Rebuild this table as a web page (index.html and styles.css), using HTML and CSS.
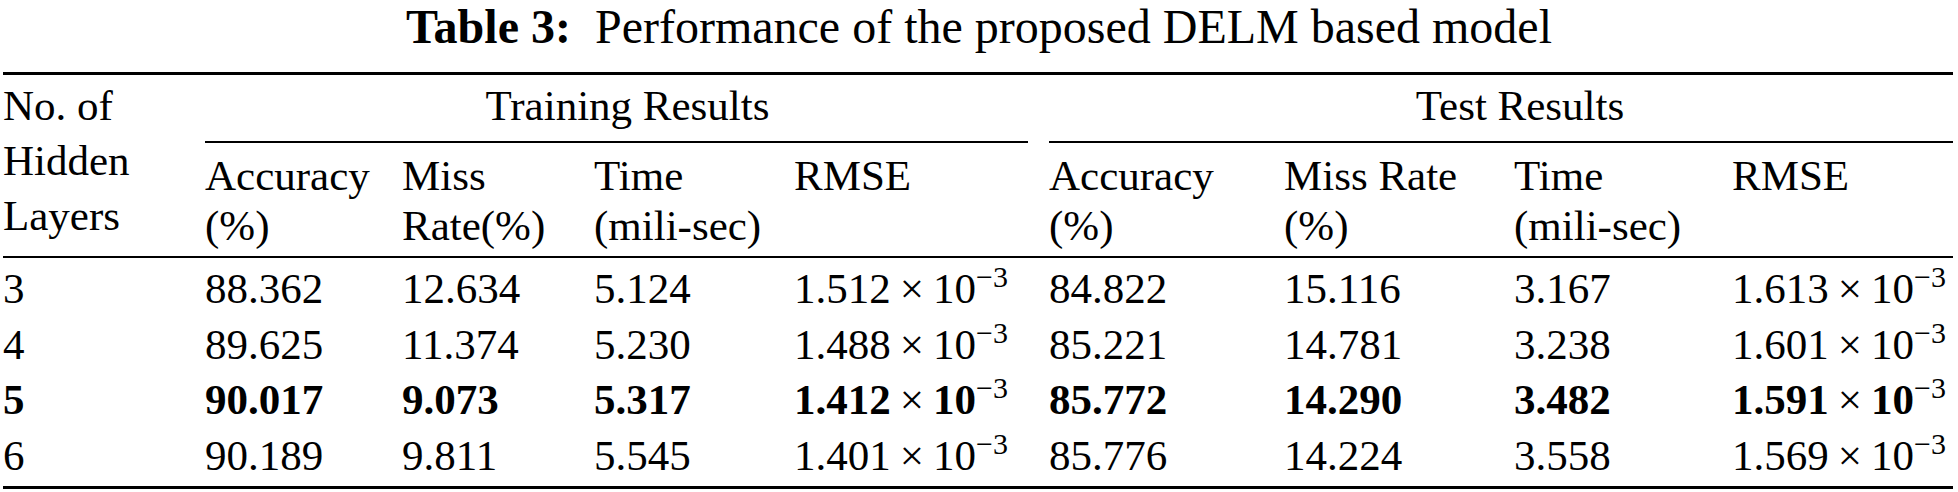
FILE: index.html
```html
<!DOCTYPE html>
<html lang="en">
<head>
  <meta charset="UTF-8">
  <title>Table 3: Performance of the proposed DELM based model</title>
  <link rel="stylesheet" href="styles.css">
</head>
<body>

<div class="caption"><b>Table 3:</b>&nbsp; Performance of the proposed DELM based model</div>

<table class="results">
  <colgroup>
    <col class="c-layers">
    <col class="c-acc"><col class="c-miss"><col class="c-time"><col class="c-rmse">
    <col class="c-acc2"><col class="c-miss2"><col class="c-time2"><col class="c-rmse2">
  </colgroup>
  <thead>
    <tr class="group-row">
      <th rowspan="2" class="layers">No. of<br>Hidden<br>Layers</th>
      <th colspan="4" class="group"><div class="cmid train">Training Results</div></th>
      <th colspan="4" class="group"><div class="cmid test">Test Results</div></th>
    </tr>
    <tr class="sub-row">
      <th>Accuracy<br>(%)</th>
      <th>Miss<br>Rate(%)</th>
      <th>Time<br>(mili-sec)</th>
      <th>RMSE</th>
      <th>Accuracy<br>(%)</th>
      <th>Miss Rate<br>(%)</th>
      <th>Time<br>(mili-sec)</th>
      <th>RMSE</th>
    </tr>
  </thead>
  <tbody>
    <tr>
      <td>3</td><td>88.362</td><td>12.634</td><td>5.124</td>
      <td>1.512<span class="times">×</span>10<sup>−3</sup></td>
      <td>84.822</td><td>15.116</td><td>3.167</td>
      <td>1.613<span class="times">×</span>10<sup>−3</sup></td>
    </tr>
    <tr>
      <td>4</td><td>89.625</td><td>11.374</td><td>5.230</td>
      <td>1.488<span class="times">×</span>10<sup>−3</sup></td>
      <td>85.221</td><td>14.781</td><td>3.238</td>
      <td>1.601<span class="times">×</span>10<sup>−3</sup></td>
    </tr>
    <tr class="best">
      <td>5</td><td>90.017</td><td>9.073</td><td>5.317</td>
      <td>1.412<span class="times">×</span>10<sup>−3</sup></td>
      <td>85.772</td><td>14.290</td><td>3.482</td>
      <td>1.591<span class="times">×</span>10<sup>−3</sup></td>
    </tr>
    <tr>
      <td>6</td><td>90.189</td><td>9.811</td><td>5.545</td>
      <td>1.401<span class="times">×</span>10<sup>−3</sup></td>
      <td>85.776</td><td>14.224</td><td>3.558</td>
      <td>1.569<span class="times">×</span>10<sup>−3</sup></td>
    </tr>
  </tbody>
</table>

</body>
</html>
```

FILE: styles.css
```css
body {
  margin: 0;
  padding: 0;
  background-color: #fff;
  color: #000;
  font-family: "Liberation Serif", "Times New Roman", serif;
}

.caption {
  font-size: 48px;
  line-height: 53px;
  text-align: center;
  margin-bottom: 19px;
}

.results {
  border-collapse: separate;
  border-spacing: 0;
  table-layout: fixed;
  width: 1950px;
  margin-left: 3px;
  font-size: 43px;
}

.c-layers { width: 202px; }
.c-acc { width: 197px; }
.c-miss { width: 192px; }
.c-time { width: 200px; }
.c-rmse { width: 255px; }
.c-acc2 { width: 235px; }
.c-miss2 { width: 230px; }
.c-time2 { width: 218px; }
.c-rmse2 { width: 221px; }

th, td {
  padding: 0;
  text-align: left;
  vertical-align: top;
  font-weight: normal;
  white-space: nowrap;
}

/* top rule */
.group-row th {
  border-top: 3px solid #000;
  padding-top: 3px;
  line-height: 55px;
}

.layers {
  border-bottom: 2px solid #000;
}

.cmid {
  text-align: center;
  padding-bottom: 8px;
  border-bottom: 2px solid #000;
}

.cmid.train {
  margin-right: 21px;
  padding-left: 22px;
}

.cmid.test {
  padding-left: 38px;
}

/* midrule */
.sub-row th {
  line-height: 50px;
  padding-top: 8px;
  padding-bottom: 5px;
  border-bottom: 2px solid #000;
}

td {
  line-height: 55.5px;
}

tbody tr:first-child td {
  padding-top: 3px;
}

/* bottom rule */
tbody tr:last-child td {
  padding-bottom: 3px;
  border-bottom: 3px solid #000;
}

.best td {
  font-weight: bold;
}

.times {
  font-weight: normal;
  margin: 0 9px;
}

sup {
  font-size: 30px;
  font-weight: normal;
  line-height: 0;
  vertical-align: 16px;
}
```
